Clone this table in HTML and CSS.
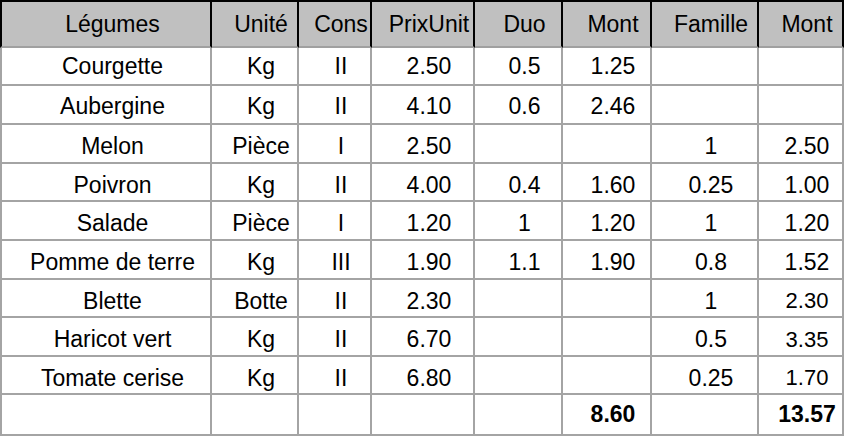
FILE: index.html
```html
<!DOCTYPE html>
<html lang="fr">
<head>
<meta charset="utf-8">
<title>Légumes</title>
<link rel="stylesheet" href="styles.css">
</head>
<body>
<div class="sheet">
  <div class="c h first">Légumes</div><div class="c h">Unité</div><div class="c h">Cons</div><div class="c h">PrixUnit</div><div class="c h">Duo</div><div class="c h">Mont</div><div class="c h">Famille</div><div class="c h">Mont</div>

  <div class="c first">Courgette</div><div class="c">Kg</div><div class="c">II</div><div class="c">2.50</div><div class="c">0.5</div><div class="c">1.25</div><div class="c"></div><div class="c"></div>
  <div class="c first">Aubergine</div><div class="c">Kg</div><div class="c">II</div><div class="c">4.10</div><div class="c">0.6</div><div class="c">2.46</div><div class="c"></div><div class="c"></div>
  <div class="c first">Melon</div><div class="c">Pièce</div><div class="c">I</div><div class="c">2.50</div><div class="c"></div><div class="c"></div><div class="c">1</div><div class="c">2.50</div>
  <div class="c first">Poivron</div><div class="c">Kg</div><div class="c">II</div><div class="c">4.00</div><div class="c">0.4</div><div class="c">1.60</div><div class="c">0.25</div><div class="c">1.00</div>
  <div class="c first">Salade</div><div class="c">Pièce</div><div class="c">I</div><div class="c">1.20</div><div class="c">1</div><div class="c">1.20</div><div class="c">1</div><div class="c">1.20</div>
  <div class="c first">Pomme de terre</div><div class="c">Kg</div><div class="c">III</div><div class="c">1.90</div><div class="c">1.1</div><div class="c">1.90</div><div class="c">0.8</div><div class="c">1.52</div>
  <div class="c first">Blette</div><div class="c">Botte</div><div class="c">II</div><div class="c">2.30</div><div class="c"></div><div class="c"></div><div class="c">1</div><div class="c small">2.30</div>
  <div class="c first">Haricot vert</div><div class="c">Kg</div><div class="c">II</div><div class="c">6.70</div><div class="c"></div><div class="c"></div><div class="c">0.5</div><div class="c small">3.35</div>
  <div class="c first">Tomate cerise</div><div class="c">Kg</div><div class="c">II</div><div class="c">6.80</div><div class="c"></div><div class="c"></div><div class="c">0.25</div><div class="c small">1.70</div>
  <div class="c first"></div><div class="c"></div><div class="c"></div><div class="c"></div><div class="c"></div><div class="c total">8.60</div><div class="c"></div><div class="c total">13.57</div>
</div>
</body>
</html>
```
FILE: styles.css
```css
html, body {
  margin: 0;
  padding: 0;
  background: #ffffff;
}

.sheet {
  display: grid;
  grid-template-columns: 212px 87px 73px 103px 88px 89px 107px 85px;
  grid-template-rows: 48px 38px 39px 39px 38px 39px 39px 38px 39px 38px 41px;
  width: 844px;
  font-family: "Liberation Sans", Arial, sans-serif;
  font-size: 23px;
  color: #000000;
}

.c {
  box-sizing: border-box;
  display: flex;
  align-items: center;
  justify-content: center;
  padding-left: 13px;
  white-space: nowrap;
  border-right: 2px solid #a4a4a4;
  border-bottom: 2px solid #a4a4a4;
  overflow: visible;
}

.c.first {
  border-left: 2px solid #a4a4a4;
}

.c:nth-child(n+17):nth-child(-n+24) {
  padding-top: 4px;
}

.c:nth-child(n+25):nth-child(-n+80) {
  padding-top: 6px;
}

.c.h {
  background: #c0c0c0;
  border-top: 2px solid #000000;
  border-right-color: #000000;
  border-bottom-color: #a0a0a0;
}

.c.h.first {
  border-left-color: #000000;
}

.small {
  font-size: 22px;
}

.total {
  font-weight: bold;
}
```
